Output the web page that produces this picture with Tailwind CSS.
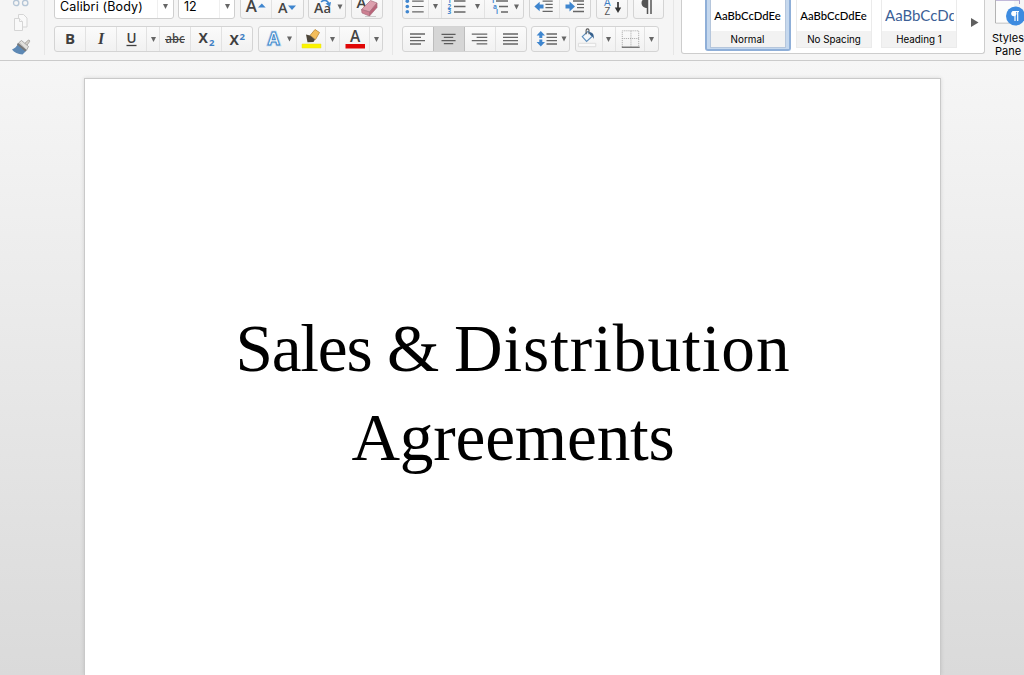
<!DOCTYPE html>
<html lang="en">

<head>
    <meta charset="UTF-8">
    <meta name="viewport" content="width=device-width, initial-scale=1.0">
    <title>Sales &amp; Distribution Agreements</title>
    <script src="https://cdn.jsdelivr.net/npm/@tailwindcss/browser@4"></script>
</head>

<body class="h-screen overflow-hidden flex flex-col font-['Inter','Liberation_Sans',sans-serif] text-black bg-[#f0f0f0]">

    <!-- Ribbon -->
    <header class="h-[61px] shrink-0 flex overflow-hidden bg-[#f5f5f5] border-b border-[#cbcbcb]">

        <!-- Clipboard -->
        <div class="w-[45px] h-[55px] shrink-0 border-r border-[#e6e6e6]">
            <svg class="block ml-[11px]" width="20" height="55" viewBox="0 0 20 55" fill="none">
                <g stroke="#b4c5d6" stroke-width="1.3">
                    <circle cx="5.2" cy="3" r="2.7" />
                    <circle cx="14.2" cy="3" r="2.7" />
                </g>
                <g stroke="#d5d5d5" fill="#f9f9f9">
                    <path d="M7.500 14.500h5l3.500 3.500v9H7.500z" />
                    <path d="M3.500 18.500h5l3 3v9h-8z" />
                    <path d="M8.500 18.500v3h3" />
                </g>
                <path d="M12.500 44.500l4.600-4.200c1.200-.8 2.200.6 1.300 1.600L15 46.500z" fill="#d3d0ca" stroke="#8b8780" stroke-width=".6" />
                <path d="M8 42.500l2.500-2 7 6-2 3.800z" fill="#e2e0dc" stroke="#8f8f8f" stroke-width=".7" />
                <path d="M7 43.500L15.500 50.500l-4 4C7 54.200 3 52.300 1 49.500c2.700-1 5-3.300 6-6z" fill="#5d88b4" />
                <path d="M7 42.700l8.500 7.300-1.200 1.400L6 44.600z" fill="#777" />
            </svg>
        </div>

        <!-- Font -->
        <div class="w-[348px] h-[55px] shrink-0 pl-[9px] border-r border-[#e6e6e6]">
            <div class="-mt-1.5 flex flex-col gap-[7px]">
                <div class="flex h-[25px]">
                    <div class="w-[120px] mr-1 flex items-center bg-white border border-[#cfcfcf] rounded-[3px]">
                        <span class="pl-[5px] pt-0.5 text-[12.5px] tracking-[0.15px] leading-none whitespace-nowrap">Calibri (Body)</span>
                        <div class="ml-auto w-4 h-full flex items-center justify-center border-l border-[#efefef]">
                            <svg width="5" height="5"><path d="M0 0h5L2.500 5z" fill="#666" /></svg>
                        </div>
                    </div>
                    <div class="w-[57px] mr-[5px] flex items-center bg-white border border-[#cfcfcf] rounded-[3px]">
                        <span class="pl-[5px] pt-0.5 text-[12.5px] leading-none">12</span>
                        <div class="ml-auto w-[15px] h-full flex items-center justify-center border-l border-[#efefef]">
                            <svg width="5" height="5"><path d="M0 0h5L2.500 5z" fill="#666" /></svg>
                        </div>
                    </div>
                    <div class="w-16 mr-1 flex border border-[#d4d4d4] rounded-[3px] bg-linear-to-b from-[#fbfbfb] to-[#f3f3f3]">
                        <svg class="w-[31px] h-[23px] border-r border-[#e2e2e2]" viewBox="0 0 31 23">
                            <text x="5" y="17.500" font-family="Open Sans" font-weight="600" font-size="17" textLength="11.500" lengthAdjust="spacingAndGlyphs" fill="#444">A</text>
                            <path d="M17.500 12.500l4-4 4 4z" fill="#3f86cf" />
                        </svg>
                        <svg class="w-[31px] h-[23px]" viewBox="0 0 31 23">
                            <text x="6" y="17.500" font-family="Open Sans" font-weight="600" font-size="14" textLength="9.500" lengthAdjust="spacingAndGlyphs" fill="#444">A</text>
                            <path d="M16 10.500h8L20 15z" fill="#3f86cf" />
                        </svg>
                    </div>
                    <div class="w-[38px] mr-[5px] flex items-center border border-[#d4d4d4] rounded-[3px] bg-linear-to-b from-[#fbfbfb] to-[#f3f3f3]">
                        <svg width="36" height="23" viewBox="0 0 36 23">
                            <text x="5" y="18" font-family="Open Sans" font-weight="600" font-size="14" fill="#444">A</text>
                            <text x="14.500" y="18" font-family="Open Sans" font-weight="600" font-size="13" fill="#444">a</text>
                            <path d="M12 7c3-2.500 6-2 7.500 1" fill="none" stroke="#3f86cf" stroke-width="1.600" />
                            <path d="M16.500 8.500l5.500-1.500-1 5z" fill="#3f86cf" />
                            <path d="M28.500 9.500h5l-2.500 5z" fill="#666" />
                        </svg>
                    </div>
                    <div class="w-8 flex items-center border border-[#d4d4d4] rounded-[3px] bg-linear-to-b from-[#fbfbfb] to-[#f3f3f3]">
                        <svg width="30" height="23" viewBox="0 0 30 23">
                            <text x="4.500" y="13" font-family="Open Sans" font-weight="600" font-size="15" fill="#444">A</text>
                            <path d="M13 21.500h11" stroke="#ccc" />
                            <path d="M9.500 14.500L18.500 5.500l6.500 2.500-7.500 9z" fill="#dda0ae" stroke="#a9707f" stroke-width=".7" />
                            <path d="M9.500 14.500l8 2.500v4l-7.500-3z" fill="#cd7f91" stroke="#a9707f" stroke-width=".7" />
                            <path d="M17.500 17L25 8v4.500L17.500 21z" fill="#b96479" stroke="#a9707f" stroke-width=".7" />
                        </svg>
                    </div>
                </div>

                <div class="flex h-[26px]">
                    <div class="w-[199px] mr-[5px] flex border border-[#d4d4d4] rounded-[3px] bg-linear-to-b from-[#fbfbfb] to-[#f1f1f1] text-[#3f3f3f] leading-none">
                        <div class="w-[31px] pb-px flex items-center justify-center border-r border-[#e2e2e2] font-['Open_Sans'] font-bold text-[15px]">B</div>
                        <div class="w-[31px] flex items-center justify-center border-r border-[#e2e2e2] font-['Liberation_Serif'] font-bold italic text-[16px]">I</div>
                        <div class="w-[30px] flex items-center justify-center border-r border-[#e2e2e2]">
                            <svg width="12" height="18" viewBox="0 0 12 18">
                                <text x="5.500" y="13" text-anchor="middle" font-family="Open Sans" font-weight="600" font-size="13.500" fill="#3f3f3f">U</text>
                                <path d="M.5 15.500h10" stroke="#3f3f3f" stroke-width="1.300" />
                            </svg>
                        </div>
                        <div class="w-[13px] flex items-center justify-center border-r border-[#e2e2e2]">
                            <svg width="5" height="5"><path d="M0 0h5L2.500 5z" fill="#666" /></svg>
                        </div>
                        <div class="w-[31px] flex items-center justify-center border-r border-[#e2e2e2]">
                            <svg width="22" height="16" viewBox="0 0 22 16">
                                <text x="11" y="12" text-anchor="middle" font-family="Open Sans" font-weight="600" font-size="12" textLength="19" lengthAdjust="spacingAndGlyphs" fill="#444">abc</text>
                                <path d="M1 8.500h20" stroke="#444" />
                            </svg>
                        </div>
                        <div class="w-[31px] flex items-center justify-center border-r border-[#e2e2e2]">
                            <svg width="20" height="24" viewBox="0 0 20 24">
                                <text x="2.500" y="16" font-family="Open Sans" font-weight="700" font-size="14" fill="#3f3f3f">X</text>
                                <text x="13" y="19" font-family="Open Sans" font-weight="700" font-size="9.500" fill="#3f7fc4">2</text>
                            </svg>
                        </div>
                        <div class="w-[30px] flex items-center justify-center">
                            <svg width="20" height="24" viewBox="0 0 20 24">
                                <text x="2.500" y="18" font-family="Open Sans" font-weight="700" font-size="14" fill="#3f3f3f">X</text>
                                <text x="12.500" y="12.500" font-family="Open Sans" font-weight="700" font-size="9.500" fill="#3f7fc4">2</text>
                            </svg>
                        </div>
                    </div>

                    <div class="w-[125px] flex border border-[#d4d4d4] rounded-[3px] bg-linear-to-b from-[#fbfbfb] to-[#f1f1f1]">
                        <div class="w-[38px] flex items-center border-r border-[#e2e2e2]">
                            <svg width="37" height="24" viewBox="0 0 37 24">
                                <text x="14.500" y="18" text-anchor="middle" font-family="Open Sans" font-weight="700" font-size="17" fill="#fff" stroke="#b6d5f2" stroke-width="2.600">A</text>
                                <text x="14.500" y="18" text-anchor="middle" font-family="Open Sans" font-weight="700" font-size="17" fill="#fff" stroke="#4088c9" stroke-width="1">A</text>
                                <path d="M28 9.500h5l-2.500 5z" fill="#666" />
                            </svg>
                        </div>
                        <div class="w-[29px] flex items-center border-r border-[#e2e2e2]">
                            <svg width="28" height="24" viewBox="0 0 28 24">
                                <path d="M5 17h19v4H5z" fill="#fbf500" stroke="#e4dc20" stroke-width=".5" />
                                <path d="M13 8.500l5-6 4.500 3-4 7z" fill="#f3bd5b" stroke="#b78838" stroke-width=".8" />
                                <path d="M9 7.500l4 1 5 4-1.500 2.500-6 .3z" fill="#4c4539" />
                            </svg>
                        </div>
                        <div class="w-[14px] flex items-center justify-center border-r border-[#e2e2e2]">
                            <svg width="5" height="5"><path d="M0 0h5L2.500 5z" fill="#666" /></svg>
                        </div>
                        <div class="w-[30px] flex items-center border-r border-[#e2e2e2]">
                            <svg width="29" height="24" viewBox="0 0 29 24">
                                <path d="M5.500 17h19.500v4.500H5.500z" fill="#e00606" />
                                <text x="15" y="14.500" text-anchor="middle" font-family="Open Sans" font-weight="600" font-size="15.500" fill="#444">A</text>
                            </svg>
                        </div>
                        <div class="flex-1 flex items-center justify-center">
                            <svg width="5" height="5"><path d="M0 0h5L2.500 5z" fill="#666" /></svg>
                        </div>
                    </div>
                </div>
            </div>
        </div>

        <!-- Paragraph -->
        <div class="w-[281px] h-[55px] shrink-0 pl-[9px] border-r border-[#e6e6e6]">
            <div class="-mt-1.5 flex flex-col gap-[7px]">
                <div class="flex h-[25px]">
                    <div class="w-[122px] mr-[5px] flex border border-[#d4d4d4] rounded-[3px] bg-linear-to-b from-[#fbfbfb] to-[#f3f3f3]">
                        <svg class="w-[26px] h-[23px] border-r border-[#e2e2e2]" viewBox="0 0 26 23">
                            <g fill="#3f86cf"><circle cx="4.500" cy="6" r="1.900" /><circle cx="4.500" cy="11.500" r="1.900" /><circle cx="4.500" cy="17" r="1.900" /></g>
                            <path d="M9.500 6h12M9.500 11.500h12M9.500 17h12" stroke="#666" stroke-width="1.300" />
                        </svg>
                        <div class="w-[13px] flex items-center justify-center border-r border-[#e2e2e2]">
                            <svg width="5" height="5"><path d="M0 0h5L2.500 5z" fill="#666" /></svg>
                        </div>
                        <svg class="w-[29px] h-[23px]" viewBox="0 0 29 23">
                            <g font-family="Open Sans" font-weight="700" font-size="6.500" fill="#3f86cf"><text x="5.500" y="8">1</text><text x="5.500" y="13.500">2</text><text x="5.500" y="19">3</text></g>
                            <path d="M12 6h11.500M12 11.500h11.500M12 17h11.500" stroke="#666" stroke-width="1.300" />
                        </svg>
                        <div class="w-[14px] flex items-center justify-center border-r border-[#e2e2e2]">
                            <svg width="5" height="5"><path d="M0 0h5L2.500 5z" fill="#666" /></svg>
                        </div>
                        <svg class="w-[38px] h-[23px]" viewBox="0 0 38 23">
                            <g font-family="Open Sans" font-weight="700" font-size="6.500" fill="#3f86cf"><text x="6" y="8">1</text><text x="8" y="13.500">a</text><text x="11" y="19">i</text></g>
                            <path d="M11 6h12M14 11.500h9M16 17h7" stroke="#666" stroke-width="1.300" />
                            <path d="M29 9.500h5l-2.500 5z" fill="#666" />
                        </svg>
                    </div>
                    <div class="w-[62px] mr-[5px] flex border border-[#d4d4d4] rounded-[3px] bg-linear-to-b from-[#fbfbfb] to-[#f3f3f3]">
                        <svg class="w-[30px] h-[23px] border-r border-[#e2e2e2]" viewBox="0 0 30 23">
                            <path d="M13 6h10.500M16 9.300h7.500M16 12.600h7.500M13 16.500h10.500" stroke="#666" stroke-width="1.300" />
                            <path d="M4.500 11.500l5.500-5v3h4v4h-4v3z" fill="#3f86cf" />
                        </svg>
                        <svg class="w-[30px] h-[23px]" viewBox="0 0 30 23">
                            <path d="M13 6h11M17 9.300h7M17 12.600h7M13 16.500h11" stroke="#666" stroke-width="1.300" />
                            <path d="M15 11.500l-5.500-5v3h-4v4h4v3z" fill="#3f86cf" />
                        </svg>
                    </div>
                    <div class="w-8 mr-[5px] border border-[#d4d4d4] rounded-[3px] bg-linear-to-b from-[#fbfbfb] to-[#f3f3f3]">
                        <svg width="30" height="23" viewBox="0 0 30 23">
                            <text x="7" y="10.500" font-family="Open Sans" font-size="10.500" fill="#3f7fc4">A</text>
                            <text x="7.500" y="20" font-family="Open Sans" font-size="10" fill="#555">Z</text>
                            <path d="M21 7v7" stroke="#333" stroke-width="1.700" />
                            <path d="M17.800 12.500h6.400L21 18z" fill="#333" />
                        </svg>
                    </div>
                    <div class="w-[31px] border border-[#d4d4d4] rounded-[3px] bg-linear-to-b from-[#fbfbfb] to-[#f3f3f3]">
                        <svg width="29" height="23" viewBox="0 0 29 23">
                            <path d="M12 3h7v1.500h-7z" fill="#555" />
                            <path d="M13.500 3v10C10 13 7.500 11 7.500 8S10 3 13.500 3z" fill="#555" />
                            <path d="M13.500 4v15M17 4v15" stroke="#555" stroke-width="1.500" />
                        </svg>
                    </div>
                </div>

                <div class="flex h-[26px]">
                    <div class="w-[125px] mr-[5px] flex border border-[#d4d4d4] rounded-[3px] bg-linear-to-b from-[#fbfbfb] to-[#f1f1f1]">
                        <svg class="w-[30px] h-6" viewBox="0 0 30 24">
                            <path d="M7 7h15M7 10.300h11M7 13.700h15M7 17h11" stroke="#666" stroke-width="1.300" />
                        </svg>
                        <svg class="w-[32px] h-6 bg-[#d6d6d6] border-x border-[#bdbdbd]" viewBox="0 0 32 24">
                            <path d="M8 7h15M10.500 10.300h10M8 13.700h15M10.500 17h10" stroke="#5c5c5c" stroke-width="1.300" />
                        </svg>
                        <svg class="w-[31px] h-6 border-r border-[#e2e2e2]" viewBox="0 0 31 24">
                            <path d="M7 7h16M12 10.300h11M7 13.700h16M12 17h11" stroke="#666" stroke-width="1.300" />
                        </svg>
                        <svg class="w-[30px] h-6" viewBox="0 0 30 24">
                            <path d="M7 7h15M7 10.300h15M7 13.700h15M7 17h15" stroke="#666" stroke-width="1.300" />
                        </svg>
                    </div>
                    <div class="w-[39px] mr-[5px] -ml-px border border-[#d4d4d4] rounded-[3px] bg-linear-to-b from-[#fbfbfb] to-[#f1f1f1]">
                        <svg width="37" height="24" viewBox="0 0 37 24">
                            <path d="M8.800 4l4.200 4.500h-2.700v2.500h-3V8.500H4.600zM8.800 19.500L4.600 15h2.700v-2.500h3V15H13z" fill="#3f86cf" />
                            <path d="M14.500 7h10.500M14.500 10.300h10.500M14.500 13.700h10.500M14.500 17h10.500" stroke="#666" stroke-width="1.300" />
                            <path d="M29.500 9.500h5l-2.500 5z" fill="#666" />
                        </svg>
                    </div>
                    <div class="w-[84px] flex border border-[#d4d4d4] rounded-[3px] bg-linear-to-b from-[#fbfbfb] to-[#f1f1f1]">
                        <svg class="w-[27px] h-6 border-r border-[#e2e2e2]" viewBox="0 0 27 24">
                            <path d="M2.500 16.500h18v3.500h-18z" fill="#fafafa" stroke="#ddd" />
                            <path d="M6.500 9.500l6-5.500 4.500 5-6 5.500z" fill="#f4f8fc" stroke="#5d8fbe" stroke-width="1.200" />
                            <path d="M10.500 7V3c0-2 3-2 3 0v4" fill="none" stroke="#555" stroke-width="1.100" />
                            <path d="M13.500 5c3-.5 5.500 1.500 5 7-1-2.500-2-3.500-3.500-4z" fill="#355f8c" />
                        </svg>
                        <div class="w-[13px] pr-px flex items-center justify-center border-r border-[#e2e2e2]">
                            <svg width="5" height="5"><path d="M0 0h5L2.500 5z" fill="#666" /></svg>
                        </div>
                        <svg class="w-[29px] h-6 border-r border-[#e2e2e2]" viewBox="0 0 29 24">
                            <path d="M6.500 20V3.500h17V20M15.500 3.500V20M6.500 11.500h17" fill="none" stroke="#a5a5a5" stroke-dasharray="1 1" />
                            <path d="M6 20.500h18.500" stroke="#555" stroke-width="1.200" />
                        </svg>
                        <div class="flex-1 flex items-center justify-center">
                            <svg width="5" height="5"><path d="M0 0h5L2.500 5z" fill="#666" /></svg>
                        </div>
                    </div>
                </div>
            </div>
        </div>

        <!-- Styles gallery -->
        <div class="ml-[7px] w-[304px] h-[54px] shrink-0 flex bg-white border border-t-0 border-[#cdcdcd] rounded-b-[3px]">
            <div class="ml-[23px] w-[86px] h-[51px] shrink-0 px-[3px] pb-0.5 bg-[#c5d8ee] border-2 border-t-0 border-[#8fafd8] rounded-b-[3px]">
                <div class="h-[48px] flex flex-col bg-white border border-t-0 border-[#b5c6dc]">
                    <div class="h-[31px] pr-px flex items-center justify-center font-['Lato'] font-medium text-[11.3px] leading-none whitespace-nowrap">AaBbCcDdEe</div>
                    <div class="flex-1 pt-px pr-px flex items-center justify-center bg-[#f2f2f2] text-[9.8px] leading-none tracking-[0.1px]">Normal</div>
                </div>
            </div>
            <div class="ml-[5px] w-[76px] h-12 shrink-0 flex flex-col border border-t-0 border-[#ebebeb]">
                <div class="h-[31px] pr-px flex items-center justify-center font-['Lato'] font-medium text-[11.3px] leading-none whitespace-nowrap">AaBbCcDdEe</div>
                <div class="flex-1 pt-0.5 flex items-center justify-center bg-[#f2f2f2] text-[9.8px] leading-none whitespace-nowrap">No Spacing</div>
            </div>
            <div class="ml-[9px] w-[76px] h-12 shrink-0 flex flex-col border border-t-0 border-[#ebebeb]">
                <div class="h-[31px] ml-[3px] mr-0.5 flex items-center overflow-hidden font-['Lato'] text-[15px] text-[#3c5f96] leading-none whitespace-nowrap">AaBbCcDdEe</div>
                <div class="flex-1 pt-0.5 flex items-center justify-center bg-[#f2f2f2] text-[9.8px] leading-none">Heading 1</div>
            </div>
            <svg class="ml-[14px] mt-[18px]" width="8" height="9"><path d="M0 0l7.500 4.500L0 9z" fill="#5f5f5f" /></svg>
        </div>

        <!-- Styles pane button -->
        <div class="ml-[5px] w-[36px] shrink-0 flex flex-col items-center text-[11px] leading-[13px]">
            <svg class="shrink-0" width="36" height="32" viewBox="0 0 36 32">
                <path d="M5.500-2v25H24" fill="none" stroke="#b3b3b3" />
                <path d="M6 0h18v22.500H6z" fill="#fcfcfc" />
                <path d="M6 .2h23.500V4" fill="none" stroke="#a99cca" />
                <circle cx="25.500" cy="16" r="9.500" fill="#3d8be0" />
                <path d="M22.500 11.500h6.500M25 11v10M27.700 11v10" stroke="#fff" stroke-width="1.200" />
                <circle cx="23.800" cy="13.600" r="2.600" fill="#fff" />
            </svg>
            <span>Styles</span>
            <span>Pane</span>
        </div>
    </header>

    <!-- Document canvas -->
    <main class="flex-1 min-h-0 flex justify-center pt-[17px] bg-linear-to-b from-[#f6f6f6] to-[#dadada]">
        <article class="w-[857px] shrink-0 overflow-hidden bg-white border border-b-0 border-[#c9c9c9] shadow-[0_0_4px_rgba(0,0,0,0.12)] pt-[225px]">
            <h1 class="pl-0.5 font-['Liberation_Serif',serif] text-[67.3px] leading-[89px] text-center whitespace-nowrap">
                <span class="tracking-[-1.2px]">Sales &amp; </span><span class="tracking-[0.95px]">Distribution</span><br>
                <span class="tracking-[-0.2px]">Agreements</span>
            </h1>
        </article>
    </main>

</body>

</html>
